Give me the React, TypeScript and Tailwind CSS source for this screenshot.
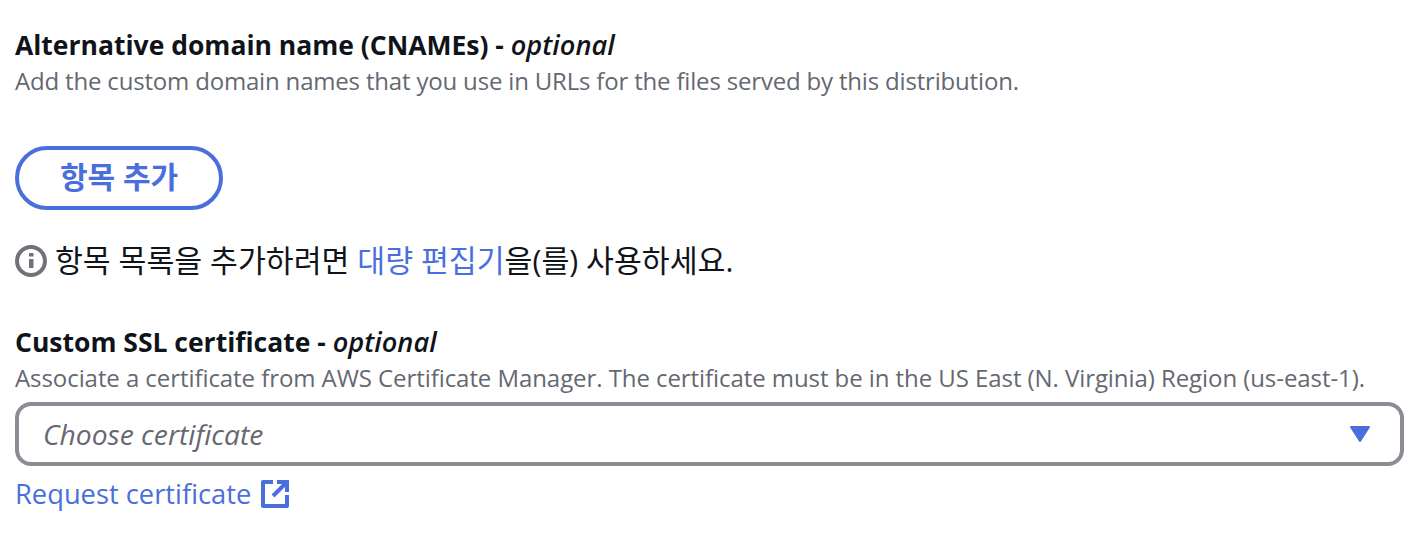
const font = "font-['Open_Sans','Noto_Sans_CJK_KR',sans-serif]";

function InfoIcon() {
  return (
    <svg viewBox="0 0 32 32" className="w-8 h-8 shrink-0" fill="none">
      <circle cx="16" cy="16" r="14" stroke="#6f7279" strokeWidth="4" />
      <rect x="14" y="14" width="4.5" height="9" fill="#6f7279" />
      <rect x="14" y="8" width="4.5" height="3.5" fill="#6f7279" />
    </svg>
  );
}

function ExternalIcon() {
  return (
    <svg viewBox="0 0 28 28" className="w-7 h-7 shrink-0" fill="none" stroke="#4a6fdc" strokeWidth="4">
      <path d="M12 2H2v24h24V15" strokeLinejoin="round" />
      <path d="M16 2h10v10" />
      <path d="M26 2L12 16" />
    </svg>
  );
}

export default function App() {
  return (
    <div className={`${font} w-[1428px] h-[544px] bg-white pl-[15px] pr-6 pt-7`}>
      <div className="text-[#0f141a] text-[26.5px] leading-[34px] font-bold">
        Alternative domain name (CNAMEs) - <span className="italic font-semibold text-[27.2px]">optional</span>
      </div>
      <div className="mt-px text-[#656871] text-[24px] leading-9 tracking-[-0.18px]">
        Add the custom domain names that you use in URLs for the files served by this distribution.
      </div>

      <button className="mt-[47px] w-[208px] h-16 pb-[3px] flex items-center justify-center rounded-full border-4 border-[#4a6fdc] text-[#4a6fdc] text-[30px] font-bold">
        항목 추가
      </button>

      <div className="mt-[35px] flex items-center gap-2 text-[#0f141a] text-[30.3px] leading-8">
        <InfoIcon />
        <span>
          항목 목록을 추가하려면 <a className="text-[#4a6fdc]">대량 편집기</a>을(를) 사용하세요.
        </span>
      </div>

      <div className="mt-12 text-[#0f141a] text-[26.5px] leading-[34px] font-bold">
        Custom SSL certificate - <span className="italic font-semibold text-[27.2px]">optional</span>
      </div>
      <div className="mt-px text-[#656871] text-[24px] leading-9 tracking-[-0.07px]">
        Associate a certificate from AWS Certificate Manager. The certificate must be in the US East (N. Virginia) Region (us-east-1).
      </div>

      <div className="mt-[6px] w-[1389px] h-16 flex items-center justify-between rounded-2xl border-4 border-[#8c8c94] pl-6 pr-[30px]">
        <span className="italic text-[#656871] text-[28.2px]">Choose certificate</span>
        <svg viewBox="0 0 20 16" className="w-5 h-4" fill="#4a6fdc" stroke="#4a6fdc" strokeWidth="2" strokeLinejoin="round">
          <path d="M1 1h18L10 15z" />
        </svg>
      </div>

      <div className="mt-[10px] flex items-center gap-[10px] text-[#4a6fdc] text-[27.3px] leading-9">
        <a>Request certificate</a>
        <ExternalIcon />
      </div>
    </div>
  );
}
